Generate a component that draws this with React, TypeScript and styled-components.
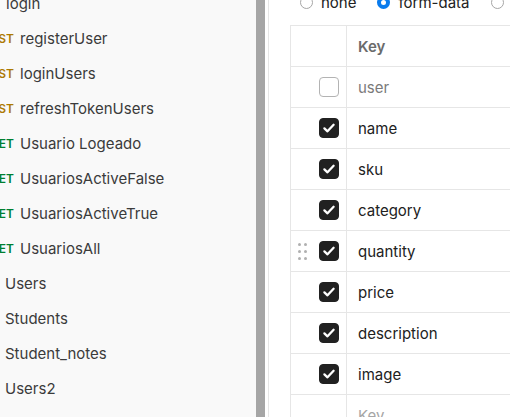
import React from "react";
import styled, { createGlobalStyle } from "styled-components";

const Global = createGlobalStyle`
  html, body { margin: 0; padding: 0; background: #ffffff; }
  body { font-family: Inter, "Noto Sans", "Liberation Sans", sans-serif; }
  #root { width: 510px; height: 417px; overflow: hidden; }
`;

const Page = styled.div`
  display: flex;
  width: 510px;
  height: 417px;
  overflow: hidden;
`;

const Sidebar = styled.aside`
  width: 256px;
  flex: none;
  background: #f9f9f9;
  overflow: hidden;
`;

const ItemList = styled.ul`
  list-style: none;
  margin: -14px 0 0 0;
  padding: 0;
`;

const Item = styled.li<{ $indent: number }>`
  display: flex;
  align-items: center;
  height: 35px;
  padding-left: ${(p) => p.$indent}px;
  font-size: 15px;
  color: #3b3b3b;
  white-space: nowrap;
`;

const Method = styled.span<{ $color: string }>`
  width: 40px;
  margin-left: -26px;
  margin-right: 6px;
  text-align: right;
  font-size: 12px;
  font-weight: 600;
  color: ${(p) => p.$color};
  flex: none;
`;

const Splitter = styled.div`
  width: 9px;
  flex: none;
  background: #a6a6a6;
`;

const Gutter = styled.div`
  width: 3px;
  flex: none;
  background: #ffffff;
  border-right: 1px solid #e6e6e6;
`;

const Main = styled.main`
  flex: 1;
  min-width: 0;
  padding-left: 21px;
  overflow: hidden;
`;

const RadioRow = styled.div`
  display: flex;
  align-items: center;
  height: 18px;
  margin-top: -7px;
  margin-left: 10px;
  margin-bottom: 14px;
  font-size: 15px;
  color: #212121;
  white-space: nowrap;
`;

const RadioOption = styled.label`
  display: flex;
  align-items: center;
  gap: 8px;
  margin-right: 21px;
`;

const RadioCircle = styled.span<{ $on?: boolean }>`
  width: 13px;
  height: 13px;
  box-sizing: border-box;
  border-radius: 50%;
  border: ${(p) => (p.$on ? "4px solid #097bed" : "1px solid #a6a6a6")};
  background: #ffffff;
  flex: none;
`;

const Table = styled.div`
  width: 400px;
  border-top: 1px solid #e6e6e6;
  border-left: 1px solid #e6e6e6;
`;

const Row = styled.div`
  display: grid;
  grid-template-columns: 56px 1fr;
  height: 41px;
  box-sizing: border-box;
  border-bottom: 1px solid #e6e6e6;
`;

const CheckCell = styled.div`
  display: flex;
  align-items: center;
  padding: 0 7px 0 7px;
  border-right: 1px solid #e6e6e6;
`;

const KeyCell = styled.div<{ $tone: "head" | "value" | "muted" | "placeholder" }>`
  display: flex;
  align-items: center;
  padding-left: 11px;
  font-size: 15px;
  font-weight: ${(p) => (p.$tone === "head" ? 600 : 400)};
  color: ${(p) =>
    p.$tone === "head"
      ? "#6b6b6b"
      : p.$tone === "muted"
      ? "#7a7a7a"
      : p.$tone === "placeholder"
      ? "#a6a6a6"
      : "#212121"};
`;

const Box = styled.span<{ $on: boolean }>`
  margin-left: auto;
  width: 20px;
  height: 20px;
  box-sizing: border-box;
  border-radius: 4px;
  background: ${(p) => (p.$on ? "#212121" : "#ffffff")};
  border: 1px solid ${(p) => (p.$on ? "#212121" : "#b3b3b3")};
  display: flex;
  align-items: center;
  justify-content: center;
`;

const Handle = styled.span`
  display: grid;
  grid-template-columns: 3px 3px;
  grid-auto-rows: 3px;
  column-gap: 3px;
  row-gap: 4px;
  span {
    background: #b0b0b0;
    border-radius: 50%;
  }
`;

const sidebarItems: { method?: string; label: string; indent: number }[] = [
  { label: "login", indent: 6 },
  { method: "POST", label: "registerUser", indent: 0 },
  { method: "POST", label: "loginUsers", indent: 0 },
  { method: "POST", label: "refreshTokenUsers", indent: 0 },
  { method: "GET", label: "Usuario Logeado", indent: 0 },
  { method: "GET", label: "UsuariosActiveFalse", indent: 0 },
  { method: "GET", label: "UsuariosActiveTrue", indent: 0 },
  { method: "GET", label: "UsuariosAll", indent: 0 },
  { label: "Users", indent: 5 },
  { label: "Students", indent: 5 },
  { label: "Student_notes", indent: 5 },
  { label: "Users2", indent: 5 },
];

const methodColor = (m: string) => (m === "GET" ? "#007f31" : "#ad7a03");

const rows: { key: string; on: boolean; handle?: boolean }[] = [
  { key: "user", on: false },
  { key: "name", on: true },
  { key: "sku", on: true },
  { key: "category", on: true },
  { key: "quantity", on: true, handle: true },
  { key: "price", on: true },
  { key: "description", on: true },
  { key: "image", on: true },
];

const Check = () => (
  <svg width="14" height="14" viewBox="0 0 14 14">
    <path
      d="M2.4 7.4 L5.5 10.3 L11.6 3.8"
      fill="none"
      stroke="#ffffff"
      strokeWidth="2.3"
      strokeLinecap="round"
      strokeLinejoin="round"
    />
  </svg>
);

export default function App() {
  return (
    <>
      <Global />
      <Page>
        <Sidebar>
          <ItemList>
            {sidebarItems.map((it, i) => (
              <Item key={i} $indent={it.indent}>
                {it.method && <Method $color={methodColor(it.method)}>{it.method}</Method>}
                {it.label}
              </Item>
            ))}
          </ItemList>
        </Sidebar>
        <Splitter />
        <Gutter />
        <Main>
          <RadioRow>
            <RadioOption>
              <RadioCircle />
              none
            </RadioOption>
            <RadioOption>
              <RadioCircle $on />
              form-data
            </RadioOption>
            <RadioOption>
              <RadioCircle />
              x-www-form-urlencoded
            </RadioOption>
          </RadioRow>
          <Table>
            <Row>
              <CheckCell />
              <KeyCell $tone="head">Key</KeyCell>
            </Row>
            {rows.map((r) => (
              <Row key={r.key}>
                <CheckCell>
                  {r.handle && (
                    <Handle>
                      <span />
                      <span />
                      <span />
                      <span />
                      <span />
                      <span />
                    </Handle>
                  )}
                  <Box $on={r.on}>{r.on && <Check />}</Box>
                </CheckCell>
                <KeyCell $tone={r.on ? "value" : "muted"}>{r.key}</KeyCell>
              </Row>
            ))}
            <Row>
              <CheckCell />
              <KeyCell $tone="placeholder">Key</KeyCell>
            </Row>
          </Table>
        </Main>
      </Page>
    </>
  );
}
